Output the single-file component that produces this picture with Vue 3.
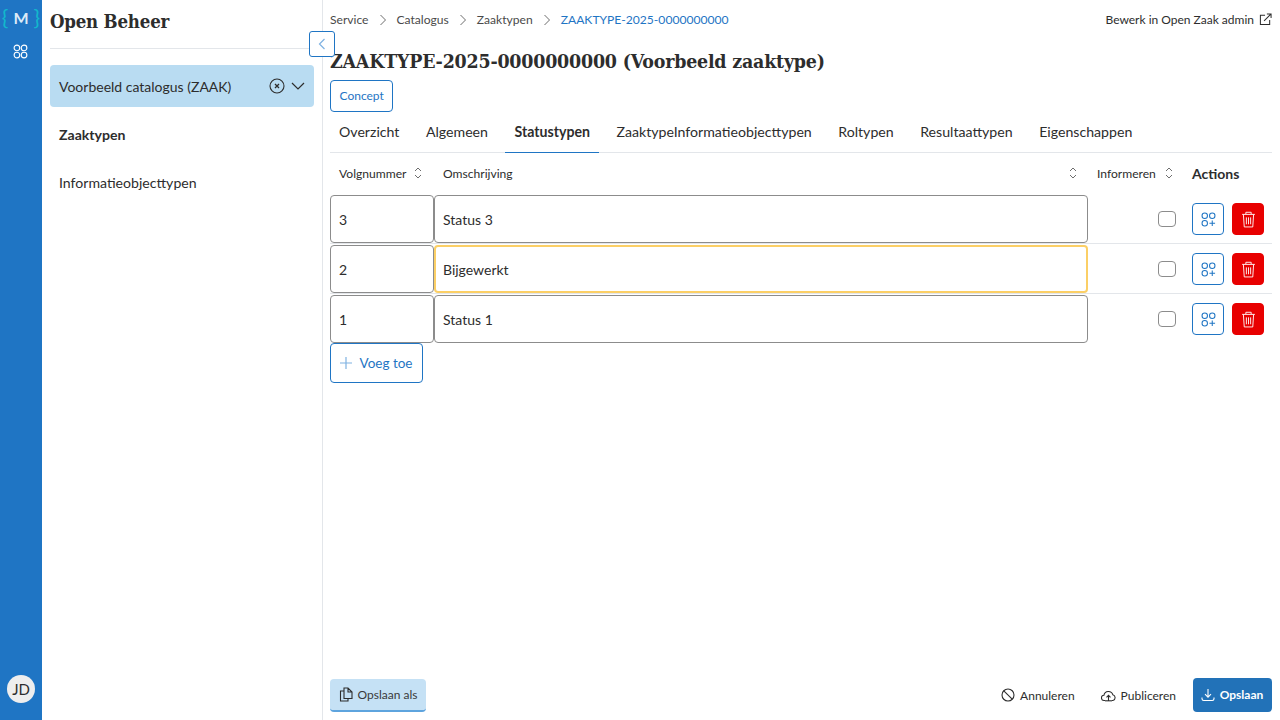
<script setup>
const crumbs = ['Service', 'Catalogus', 'Zaaktypen']
const tabs = ['Overzicht', 'Algemeen', 'Statustypen', 'ZaaktypeInformatieobjecttypen', 'Roltypen', 'Resultaattypen', 'Eigenschappen']
const rows = [
  { nr: '3', name: 'Status 3', focus: false },
  { nr: '2', name: 'Bijgewerkt', focus: true },
  { nr: '1', name: 'Status 1', focus: false }
]
</script>

<template>
  <div class="app">
    <nav class="rail">
      <div class="logo"><span class="brace">{</span><span class="m">M</span><span class="brace">}</span></div>
      <svg class="rail-icon" width="15" height="15" viewBox="0 0 16 16" fill="none" stroke="#fff" stroke-width="1.2">
        <circle cx="4.2" cy="4.2" r="3"/><circle cx="11.8" cy="4.2" r="3"/><circle cx="4.2" cy="11.8" r="3"/><circle cx="11.8" cy="11.8" r="3"/>
      </svg>
      <div class="avatar">JD</div>
    </nav>

    <aside class="side">
      <h2 class="brand">Open Beheer</h2>
      <div class="select">
        <span class="select-text">Voorbeeld catalogus (ZAAK)</span>
        <svg width="16" height="16" viewBox="0 0 16 16" fill="none" stroke="#2d2d2d" stroke-width="1.1">
          <circle cx="8" cy="8" r="7"/><path d="M6 6l4 4M10 6l-4 4" stroke-width="1.3"/>
        </svg>
        <svg class="chev" width="14" height="8" viewBox="0 0 14 8" fill="none" stroke="#2d2d2d" stroke-width="1.2"><path d="M1 1l6 6 6-6"/></svg>
      </div>
      <a class="side-link first active">Zaaktypen</a>
      <a class="side-link">Informatieobjecttypen</a>
      <button class="collapse" aria-label="Inklappen">
        <svg width="8" height="12" viewBox="0 0 8 12" fill="none" stroke="#7fb2e2" stroke-width="1.2"><path d="M6.5 1L1.5 6l5 5"/></svg>
      </button>
    </aside>

    <main class="main">
      <header class="topbar">
        <div class="crumbs">
          <template v-for="c in crumbs" :key="c">
            <span>{{ c }}</span>
            <svg width="8" height="12" viewBox="0 0 8 12" fill="none" stroke="#6d6d6d" stroke-width="1"><path d="M1.5 1l5 5-5 5"/></svg>
          </template>
          <span class="crumb-current">ZAAKTYPE-2025-0000000000</span>
        </div>
        <a class="admin">
          Bewerk in Open Zaak admin
          <svg width="13" height="13" viewBox="0 0 14 14" fill="none" stroke="#2d2d2d" stroke-width="1.1">
            <path d="M6.5 2.5H1.5v10h10v-5"/><path d="M5.5 8.5L13 1M8.5 1H13v4.5"/>
          </svg>
        </a>
      </header>

      <h1 class="title">ZAAKTYPE-2025-0000000000 (Voorbeeld zaaktype)</h1>
      <div class="badge-row"><span class="badge">Concept</span></div>

      <div class="tabs">
        <span v-for="t in tabs" :key="t" class="tab" :class="{ active: t === 'Statustypen' }">{{ t }}</span>
      </div>

      <div class="thead grid">
        <div class="th">Volgnummer <svg class="sort" width="8" height="12" viewBox="0 0 8 12" fill="none" stroke="#6d6d6d" stroke-width="1"><path d="M1 4l3-3 3 3M1 8l3 3 3-3"/></svg></div>
        <div class="th th-grow">Omschrijving <svg class="sort" width="8" height="12" viewBox="0 0 8 12" fill="none" stroke="#6d6d6d" stroke-width="1"><path d="M1 4l3-3 3 3M1 8l3 3 3-3"/></svg></div>
        <div class="th th-inf">Informeren <svg class="sort" width="8" height="12" viewBox="0 0 8 12" fill="none" stroke="#6d6d6d" stroke-width="1"><path d="M1 4l3-3 3 3M1 8l3 3 3-3"/></svg></div>
        <div class="th-actions">Actions</div>
      </div>

      <div v-for="(r, i) in rows" :key="r.nr" class="row grid" :class="{ last: i === rows.length - 1 }">
        <div class="input">{{ r.nr }}</div>
        <div class="input" :class="{ focus: r.focus }">{{ r.name }}</div>
        <div class="check-cell"><span class="check"></span></div>
        <div class="act-cell">
          <button class="icon-btn" aria-label="Toevoegen">
            <svg width="15" height="15" viewBox="0 0 16 16" fill="none" stroke="#1f75c4" stroke-width="1.1">
              <circle cx="4" cy="4" r="2.9"/><circle cx="12" cy="4" r="2.9"/><circle cx="4" cy="12" r="2.9"/><path d="M12 9v6M9 12h6"/>
            </svg>
          </button>
          <button class="icon-btn danger" aria-label="Verwijderen">
            <svg width="15" height="17" viewBox="0 0 14 16" fill="none" stroke="#fff" stroke-width="0.85">
              <path d="M1 3.2h12M4.5 3V1.2h5V3M2.2 3.4l.8 11.6h8l.8-11.6M5 6v6.5M7 6v6.5M9 6v6.5"/>
            </svg>
          </button>
        </div>
      </div>

      <div class="add-row">
        <button class="add">
          <svg width="14" height="14" viewBox="0 0 14 14" fill="none" stroke="#7fb2e2" stroke-width="1.2"><path d="M7 1v12M1 7h12"/></svg>
          Voeg toe
        </button>
      </div>

      <footer class="footer">
        <button class="save-as">
          <svg width="14" height="15" viewBox="0 0 14 15" fill="none" stroke="#2d2d2d" stroke-width="1.1">
            <path d="M5 1h4l4 4v6.5H5zM9 1v4h4M5 4H1.5v10H9v-2.5"/>
          </svg>
          Opslaan als
        </button>
        <div class="foot-right">
          <button class="ghost wide">
            <svg width="14" height="14" viewBox="0 0 14 14" fill="none" stroke="#2d2d2d" stroke-width="1.1"><circle cx="7" cy="7" r="6"/><path d="M2.8 2.8l8.4 8.4"/></svg>
            Annuleren
          </button>
          <button class="ghost">
            <svg width="15" height="13" viewBox="0 0 15 13" fill="none" stroke="#2d2d2d" stroke-width="1.1"><path d="M4 11.5H3.2a2.6 2.6 0 0 1-.3-5.2 4.6 4.6 0 0 1 8.9-.6 3 3 0 0 1 .1 5.8H11M7.5 12V6.5M5.5 8.3l2-2 2 2" /><path d="M4 11.8h7"/></svg>
            Publiceren
          </button>
          <button class="primary">
            <svg width="14" height="14" viewBox="0 0 14 14" fill="none" stroke="#fff" stroke-width="1.1"><path d="M7 1v8M4 6.2L7 9.2l3-3M1 9.5v1.3c0 1 .7 1.7 1.7 1.7h8.6c1 0 1.7-.7 1.7-1.7V9.5"/></svg>
            Opslaan
          </button>
        </div>
      </footer>
    </main>
  </div>
</template>

<style>
html, body { margin: 0; background: #fff; }
</style>

<style scoped>
.app {
  display: flex;
  width: 1280px;
  height: 720px;
  overflow: hidden;
  background: #fff;
  color: #2d2d2d;
  font-family: Lato, "Liberation Sans", sans-serif;
  font-size: 14px;
}
button { font-family: inherit; cursor: pointer; }

.rail {
  width: 42px;
  flex: none;
  background: #1f75c4;
  display: flex;
  flex-direction: column;
  align-items: center;
}
.logo {
  height: 34px;
  display: flex;
  align-items: center;
  justify-content: center;
  gap: 5px;
  color: #fff;
}
.brace { color: #12b8cc; font-size: 22px; line-height: 1; font-weight: 400; }
.m { color: #dbeaf7; font-size: 16px; font-weight: 700; }
.rail-icon { margin: 10px 2px 0 0; }
.avatar {
  margin-top: auto;
  margin-bottom: 17px;
  width: 28px;
  height: 28px;
  border-radius: 50%;
  background: #eee;
  color: #2d2d2d;
  font-size: 15px;
  display: flex;
  align-items: center;
  justify-content: center;
}

.side {
  position: relative;
  width: 281px;
  flex: none;
  box-sizing: border-box;
  border-right: 1px solid #e3e6ea;
  padding: 0 8px;
  display: flex;
  flex-direction: column;
}
.brand {
  margin: 0;
  height: 49px;
  box-sizing: border-box;
  border-bottom: 1px solid #e3e6ea;
  font-family: "DejaVu Serif", serif;
  font-stretch: condensed;
  font-size: 18.5px;
  font-weight: 700;
  line-height: 43px;
  letter-spacing: -0.2px;
}
.select {
  margin-top: 16px;
  height: 42px;
  background: #b9dcf2;
  border-radius: 4px;
  padding: 0 9px;
  display: flex;
  align-items: center;
  font-size: 14px;
}
.select-text { flex: 1; }
.chev { margin-left: 6px; }
.side-link {
  height: 48px;
  display: flex;
  align-items: center;
  padding-left: 9px;
  font-size: 14.1px;
}
.side-link.first { margin-top: 3px; }
.side-link.active { font-weight: 700; }
.collapse {
  position: absolute;
  left: 267px;
  top: 31px;
  width: 26px;
  height: 26px;
  padding: 0;
  background: #fff;
  border: 1px solid #1f75c4;
  border-radius: 3px;
  display: flex;
  align-items: center;
  justify-content: center;
  z-index: 2;
}

.main {
  flex: 1;
  min-width: 0;
  padding: 0 8px 0 7px;
  display: flex;
  flex-direction: column;
}
.topbar {
  height: 39px;
  display: flex;
  align-items: center;
  justify-content: space-between;
  font-size: 12.1px;
}
.crumbs { display: flex; align-items: center; gap: 10px; color: #4a4a4a; }
.crumb-current { color: #1f75c4; }
.admin { display: flex; align-items: center; gap: 5px; color: #2d2d2d; font-size: 12px; }

.title {
  margin: 0;
  height: 41px;
  font-family: "DejaVu Serif", serif;
  font-stretch: condensed;
  font-size: 19.4px;
  font-weight: 700;
  line-height: 46px;
  letter-spacing: -0.2px;
  white-space: nowrap;
}
.badge-row { display: flex; }
.badge {
  height: 32px;
  box-sizing: border-box;
  padding: 0 8.5px 1px;
  display: flex;
  align-items: center;
  border: 1px solid #1f75c4;
  border-radius: 4px;
  color: #1f75c4;
  font-size: 12px;
}
.tabs {
  height: 41px;
  display: flex;
  border-bottom: 1px solid #e3e6ea;
  box-sizing: border-box;
}
.tab {
  padding: 0 9px 2px;
  margin-right: 8.5px;
  display: flex;
  align-items: center;
  font-size: 14.15px;
  margin-bottom: -1px;
}
.tab.active {
  font-weight: 700;
  border-bottom: 1px solid #1f75c4;
  padding-bottom: 1px;
}

.grid {
  display: grid;
  grid-template-columns: 104px 654px 96px 88px;
}
.thead { height: 42px; padding-bottom: 2px; box-sizing: border-box; align-items: center; font-size: 12.1px; }
.th { display: flex; align-items: center; padding-left: 9px; gap: 8px; white-space: nowrap; }
.th-grow .sort { margin-left: auto; margin-right: 11px; }
.th-inf { gap: 9px; }
.th-actions { padding-left: 8px; font-weight: 700; font-size: 14px; }
.row { height: 49px; margin-bottom: 1px; border-bottom: 1px solid #e3e6ea; box-sizing: border-box; }
.row.last { height: 48px; margin-bottom: 0; border-bottom: 0; }
.input {
  height: 48px;
  box-sizing: border-box;
  border: 1px solid #8c8c8c;
  border-radius: 4px;
  padding: 0 8px;
  display: flex;
  align-items: center;
  font-size: 14px;
}
.input.focus { border: 2px solid #fbcf66; padding: 0 7px; }
.check-cell { display: flex; align-items: center; justify-content: flex-end; padding: 0 8px 0 0; height: 48px; box-sizing: border-box; }
.check {
  width: 18px;
  height: 16px;
  box-sizing: border-box;
  border: 1px solid #8c8c8c;
  border-radius: 4px;
}
.act-cell { display: flex; gap: 8px; padding: 8px 8px 0 8px; }
.icon-btn {
  width: 32px;
  height: 32px;
  padding: 0;
  background: #fff;
  border: 1px solid #1f75c4;
  border-radius: 4px;
  display: flex;
  align-items: center;
  justify-content: center;
}
.icon-btn.danger { background: #e80000; border-color: #e80000; }

.add-row { display: flex; }
.add {
  height: 40px;
  width: 93px;
  padding: 0 2px 0 0;
  background: #fff;
  border: 1px solid #1f75c4;
  border-radius: 4px;
  color: #1f75c4;
  font-size: 13.5px;
  display: flex;
  align-items: center;
  justify-content: center;
  gap: 7px;
}

.footer {
  margin-top: auto;
  height: 34px;
  padding-bottom: 8px;
  display: flex;
  justify-content: space-between;
  align-items: flex-end;
  font-size: 12px;
}
.save-as {
  width: 96px;
  height: 33px;
  padding: 0 0 1px;
  background: #c5e1f5;
  border: 0;
  border-bottom: 2px solid #5ea4de;
  border-radius: 4px;
  color: #3a3a3a;
  font-size: 12px;
  display: flex;
  align-items: center;
  justify-content: center;
  gap: 5px;
}
.foot-right { display: flex; align-items: center; }
.ghost {
  background: none;
  border: 0;
  padding: 0;
  margin-right: 17px;
  color: #2d2d2d;
  font-size: 12px;
  display: flex;
  align-items: center;
  gap: 5px;
}
.ghost.wide { margin-right: 26px; }
.primary {
  width: 79px;
  height: 34px;
  padding: 0 1px 1px 0;
  background: #2272b8;
  border: 0;
  border-radius: 4px;
  color: #fff;
  font-size: 12px;
  font-weight: 700;
  display: flex;
  align-items: center;
  justify-content: center;
  gap: 5px;
}
</style>
